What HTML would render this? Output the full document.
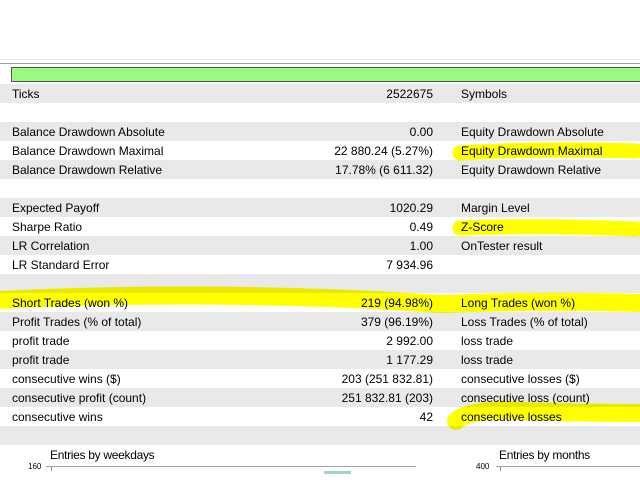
<!DOCTYPE html>
<html><head><style>
body{margin:0;width:640px;height:480px;overflow:hidden;background:#fff;font-family:"Liberation Sans",sans-serif;font-size:12px;color:#000;position:relative}
.r{position:absolute;left:0;width:640px;height:19px;line-height:21px}
.g{background:#e9e9e9}
.a{position:absolute;left:12px}
.v{position:absolute;right:207px;text-align:right}
.b{position:absolute;left:461px}
svg{position:absolute;left:0;top:0;mix-blend-mode:multiply}
.s{position:absolute;font-size:12px;letter-spacing:-0.3px}
.t{position:absolute;font-size:8px}
</style></head><body>
<div style="position:absolute;left:0;top:59px;width:640px;height:1px;background:#e6e6e6"></div>
<div style="position:absolute;left:0;top:63px;width:640px;height:1px;background:#a0a0a0"></div>
<div style="position:absolute;left:11px;top:67px;width:640px;height:13px;background:#98fb80;border:1px solid #555"></div>
<div class="r g" style="top:84px"><span class="a">Ticks</span><span class="v">2522675</span><span class="b">Symbols</span></div>
<div class="r g" style="top:122px"><span class="a">Balance Drawdown Absolute</span><span class="v">0.00</span><span class="b">Equity Drawdown Absolute</span></div>
<div class="r" style="top:141px"><span class="a">Balance Drawdown Maximal</span><span class="v">22 880.24 (5.27%)</span><span class="b">Equity Drawdown Maximal</span></div>
<div class="r g" style="top:160px"><span class="a">Balance Drawdown Relative</span><span class="v">17.78% (6 611.32)</span><span class="b">Equity Drawdown Relative</span></div>
<div class="r g" style="top:198px"><span class="a">Expected Payoff</span><span class="v">1020.29</span><span class="b">Margin Level</span></div>
<div class="r" style="top:217px"><span class="a">Sharpe Ratio</span><span class="v">0.49</span><span class="b">Z-Score</span></div>
<div class="r g" style="top:236px"><span class="a">LR Correlation</span><span class="v">1.00</span><span class="b">OnTester result</span></div>
<div class="r" style="top:255px"><span class="a">LR Standard Error</span><span class="v">7 934.96</span></div>
<div class="r g" style="top:274px"></div>
<div class="r" style="top:293px"><span class="a">Short Trades (won %)</span><span class="v">219 (94.98%)</span><span class="b">Long Trades (won %)</span></div>
<div class="r g" style="top:312px"><span class="a">Profit Trades (% of total)</span><span class="v">379 (96.19%)</span><span class="b">Loss Trades (% of total)</span></div>
<div class="r" style="top:331px"><span class="a">profit trade</span><span class="v">2 992.00</span><span class="b">loss trade</span></div>
<div class="r g" style="top:350px"><span class="a">profit trade</span><span class="v">1 177.29</span><span class="b">loss trade</span></div>
<div class="r" style="top:369px"><span class="a">consecutive wins ($)</span><span class="v">203 (251 832.81)</span><span class="b">consecutive losses ($)</span></div>
<div class="r g" style="top:388px"><span class="a">consecutive profit (count)</span><span class="v">251 832.81 (203)</span><span class="b">consecutive loss (count)</span></div>
<div class="r" style="top:407px"><span class="a">consecutive wins</span><span class="v">42</span><span class="b">consecutive losses</span></div>
<div class="r g" style="top:426px"></div>
<svg width="640" height="480">
<path d="M460 153 Q540 148 636 151" stroke="#ffff00" stroke-width="15" fill="none" stroke-linecap="round"/>
<path d="M460 228 Q540 225 636 229" stroke="#ffff00" stroke-width="15" fill="none" stroke-linecap="round"/>
<path d="M0 300 Q120 294 250 296 Q360 298 440 304 Q540 300 640 303" stroke="#ffff00" stroke-width="18" fill="none" stroke-linecap="round"/>
<path d="M456 421 Q470 408 520 411 Q580 413 640 413" stroke="#ffff00" stroke-width="18" fill="none" stroke-linecap="round"/>
</svg>
<div class="s" style="left:50px;top:448px">Entries by weekdays</div>
<div class="t" style="left:28px;top:462px">160</div>
<div style="position:absolute;left:46px;top:466px;width:370px;height:1px;background:#a0a0a0"></div>
<div style="position:absolute;left:51px;top:467px;width:1px;height:4px;background:#888"></div>
<div style="position:absolute;left:324px;top:471px;width:27px;height:3px;background:#9ed8b8"></div>
<div class="s" style="left:499px;top:448px">Entries by months</div>
<div class="t" style="left:476px;top:462px">400</div>
<div style="position:absolute;left:496px;top:466px;width:144px;height:1px;background:#a0a0a0"></div>
<div style="position:absolute;left:500px;top:467px;width:1px;height:4px;background:#888"></div>
</body></html>
